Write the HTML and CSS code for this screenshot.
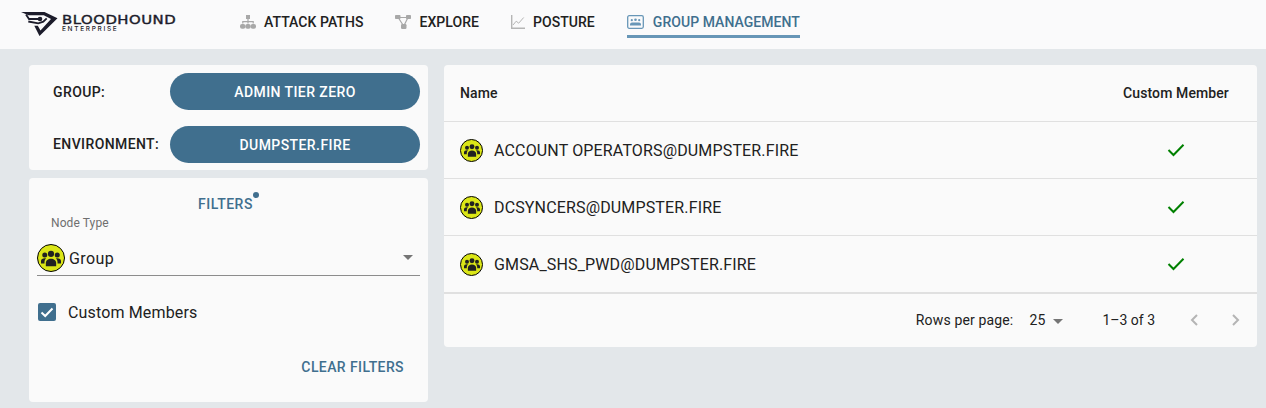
FILE: index.html
```html
<!DOCTYPE html>
<html lang="en">
<head>
<meta charset="utf-8">
<title>BloodHound Enterprise - Group Management</title>
<link rel="stylesheet" href="styles.css">
</head>
<body>
<svg class="defs" width="0" height="0" aria-hidden="true">
  <symbol id="group-glyph" viewBox="0 0 24 24">
    <circle cx="12" cy="7" r="3.700"/>
    <circle cx="4.500" cy="8.500" r="3"/>
    <circle cx="19.500" cy="8.500" r="3"/>
    <path d="M5.800 22v-4c0-3.200 2.800-5.200 6.200-5.200s6.200 2 6.200 5.200v4z"/>
    <path d="M0 18.500v-3c0-2 2-3.300 4.600-3.300 .6 0 1.100.1 1.600.2-1.300 1-2 2.800-2 4.500v1.600z"/>
    <path d="M24 18.500v-3c0-2-2-3.300-4.600-3.300-.6 0-1.100.1-1.600.2 1.300 1 2 2.800 2 4.500v1.600z"/>
  </symbol>
</svg>
<header class="nav">
  <div class="logo">
    <svg class="logo-mark" viewBox="0 0 37 28" width="37" height="28">
      <path class="logo-fill" d="M0 2H23.500L36.500 8.300 18.500 26 13.300 15.700H16.800L19.500 20.500 30 9 22.800 5.300H7.500Z"/>
      <path class="logo-line" d="M5 4.500 8 9H19M7.300 11.500 17.300 13.300 22.300 11.700 25.700 8.300"/>
      <circle class="logo-fill" cx="19" cy="9" r="2.300"/>
    </svg>
    <div class="logo-text">
      <span class="logo-name">BLOODHOUND</span>
      <span class="logo-sub">ENTERPRISE</span>
    </div>
  </div>
  <nav class="nav-items">
    <a class="nav-item">
      <svg class="nav-icon" viewBox="0 0 16 14" width="16" height="14">
        <path d="M6 0h4v4H8.600v2h5.200v2.400h-1.200V7.200H8.600v1.200H7.400V7.200H3.400v1.200H2.200V6h5.200V4H6z"/>
        <rect x="0" y="9" width="5.400" height="4.800" rx="2"/><rect x="5.300" y="9" width="5.400" height="4.800" rx="2"/><rect x="10.600" y="9" width="5.400" height="4.800" rx="2"/>
      </svg>
      <span>ATTACK PATHS</span>
    </a>
    <a class="nav-item">
      <svg class="nav-icon" viewBox="0 0 16 14" width="16" height="14">
        <rect x="0" y="0" width="5.500" height="4" rx=".8"/><rect x="11" y="0" width="5" height="4" rx=".8"/><rect x="6" y="9" width="5.500" height="5" rx="1.200"/>
        <path class="nav-line" d="M4 2.500h8M3.500 3l4.500 7M12.500 3.500l-3 6"/>
      </svg>
      <span>EXPLORE</span>
    </a>
    <a class="nav-item">
      <svg class="nav-icon nav-icon-line" viewBox="0 0 14 14" width="14" height="14">
        <path d="M.7 0v13.300H14"/>
        <path class="thin" d="M2 10l3.200-3.800 2.500 2 5-5.700"/>
      </svg>
      <span>POSTURE</span>
    </a>
    <a class="nav-item nav-item-active">
      <svg class="nav-icon" viewBox="0 0 17 14" width="17" height="14">
        <rect class="frame" x=".7" y=".7" width="15.600" height="12.600" rx="1.500"/>
        <circle cx="4.800" cy="5.200" r="1.100"/><circle cx="8.500" cy="4.800" r="1.300"/><circle cx="12.200" cy="5.200" r="1.100"/>
        <path d="M3 9.800c0-1.600 1-2.400 2-2.400h7c1 0 2 .8 2 2.400v.7H3z"/>
      </svg>
      <span>GROUP MANAGEMENT</span>
    </a>
  </nav>
</header>

<main class="content">
  <aside class="sidebar">
    <section class="card selectors">
      <div class="selector-row">
        <span class="selector-label">GROUP:</span>
        <button class="pill">ADMIN TIER ZERO</button>
      </div>
      <div class="selector-row selector-row-env">
        <span class="selector-label">ENVIRONMENT:</span>
        <button class="pill">DUMPSTER.FIRE</button>
      </div>
    </section>
    <section class="card filters">
      <div class="filters-title"><span class="filters-text">FILTERS<i class="badge"></i></span></div>
      <div class="field-label">Node Type</div>
      <div class="select">
        <span class="node-icon node-icon-lg"><svg><use href="#group-glyph"/></svg></span>
        <span class="select-value">Group</span>
        <i class="caret"></i>
      </div>
      <label class="check-row">
        <span class="checkbox"><svg viewBox="0 0 18 18" width="18" height="18"><path d="M3.500 9.500l3.700 3.500 7.300-7.500"/></svg></span>
        <span>Custom Members</span>
      </label>
      <div class="filters-actions"><button class="text-btn">CLEAR FILTERS</button></div>
    </section>
  </aside>

  <section class="card table-card">
    <div class="row head">
      <div class="cell-name">Name</div>
      <div class="cell-member">Custom Member</div>
    </div>
    <div class="row">
      <div class="cell-name"><span class="node-icon"><svg><use href="#group-glyph"/></svg></span>ACCOUNT OPERATORS@DUMPSTER.FIRE</div>
      <div class="cell-member"><svg class="tick" viewBox="0 0 18 14" width="18" height="14"><path d="M1.500 7l5 5L16.500 1.800"/></svg></div>
    </div>
    <div class="row">
      <div class="cell-name"><span class="node-icon"><svg><use href="#group-glyph"/></svg></span>DCSYNCERS@DUMPSTER.FIRE</div>
      <div class="cell-member"><svg class="tick" viewBox="0 0 18 14" width="18" height="14"><path d="M1.500 7l5 5L16.500 1.800"/></svg></div>
    </div>
    <div class="row row-last">
      <div class="cell-name"><span class="node-icon"><svg><use href="#group-glyph"/></svg></span>GMSA_SHS_PWD@DUMPSTER.FIRE</div>
      <div class="cell-member"><svg class="tick" viewBox="0 0 18 14" width="18" height="14"><path d="M1.500 7l5 5L16.500 1.800"/></svg></div>
    </div>
    <div class="pagination">
      <span>Rows per page:</span>
      <span class="per-page">25<i class="caret caret-sm"></i></span>
      <span class="range">1–3 of 3</span>
      <span class="pager">
        <svg viewBox="0 0 10 14" width="10" height="14"><path d="M8 2L3 7l5 5"/></svg>
        <svg viewBox="0 0 10 14" width="10" height="14"><path d="M2 2l5 5-5 5"/></svg>
      </span>
    </div>
  </section>
</main>
</body>
</html>
```
FILE: styles.css
```css
* { box-sizing: border-box; }
html, body { margin: 0; height: 100%; }
body {
  background: #e3e7ea;
  font-family: Roboto, "Liberation Sans", sans-serif;
  color: #212121;
  overflow: hidden;
}
.defs { position: absolute; }

.nav {
  height: 49px;
  background: #fafafb;
  display: flex;
  align-items: flex-start;
  padding-left: 21px;
}
.logo { display: flex; align-items: flex-start; width: 219px; padding-top: 10px; }
.logo-mark { display: block; width: 37px; height: 28px; margin-right: 4px; }
.logo-fill { fill: #1c1c2b; }
.logo-line { fill: none; stroke: #1c1c2b; stroke-width: 1.800; }
.logo-text { display: flex; flex-direction: column; padding-top: 5px; }
.logo-name {
  font-family: "DejaVu Sans", sans-serif;
  font-size: 12px;
  line-height: 11px;
  letter-spacing: .4px;
  color: #1c1c2b;
  font-weight: 400;
  -webkit-text-stroke: .4px #1c1c2b;
  transform: scaleX(1.24);
  transform-origin: left center;
  white-space: nowrap;
}
.logo-sub {
  font-family: Inter, sans-serif;
  font-size: 6.500px;
  line-height: 7px;
  letter-spacing: 1.700px;
  color: #1c1c2b;
  font-weight: 500;
}
.nav-items { display: flex; gap: 32px; }
.nav-item {
  height: 38px;
  display: flex;
  align-items: center;
  gap: 8px;
  font-size: 14px;
  font-weight: 500;
  letter-spacing: .05px;
  color: #212121;
  padding-top: 8px;
  padding-bottom: 2px;
}
.nav-icon { fill: #a8a8a8; display: block; }
.nav-line { fill: none; stroke: #a8a8a8; stroke-width: 1.200; }
.nav-icon-line { fill: none; stroke: #b5b5b5; stroke-width: 1.400; }
.nav-icon-line .thin { stroke-width: 1; }
.nav-item-active { color: #406f8e; border-bottom: 3px solid #6796b7; padding-bottom: 0; gap: 9px; }
.nav-item-active .nav-icon { fill: #6796b7; }
.nav-item-active .frame { fill: none; stroke: #6796b7; stroke-width: 1.300; }

.content {
  display: flex;
  gap: 16px;
  padding: 16px 9px 0 29px;
  align-items: flex-start;
}
.sidebar { width: 399px; flex: none; display: flex; flex-direction: column; gap: 8px; }
.card { background: #fafafa; border-radius: 4px; }

.selectors { height: 105px; padding: 8px 8px 0 24px; display: flex; flex-direction: column; gap: 16px; }
.selector-row { display: flex; align-items: center; justify-content: space-between; height: 37px; }
.selector-label { font-size: 14px; font-weight: 500; letter-spacing: .4px; color: #212121; }
.selector-row-env .selector-label { margin-bottom: 2px; }
.pill {
  width: 250px;
  height: 100%;
  border: 0;
  border-radius: 19px;
  background: #406f8e;
  color: #fff;
  font: 500 14px Roboto, sans-serif;
  letter-spacing: .42px;
}

.filters { height: 224px; padding: 0 8px; display: flex; flex-direction: column; }
.filters-title { height: 45px; padding: 17px 6px 0 0; text-align: center; font-size: 14px; font-weight: 500; color: #406f8e; line-height: 18px; letter-spacing: .5px; }
.filters-text { position: relative; }
.badge { position: absolute; right: -6px; top: -4px; width: 6px; height: 6px; border-radius: 50%; background: #406f8e; }
.field-label { font-size: 12px; color: #6f6f6f; line-height: 14px; margin-left: 14px; margin-top: -7px; letter-spacing: .1px; }
.select {
  margin-top: 13px;
  height: 33px;
  padding-bottom: 2px;
  display: flex;
  align-items: center;
  border-bottom: 1px solid #8c8c8c;
  position: relative;
  font-size: 16px;
}
.select-value { margin-left: 4px; letter-spacing: .4px; }
.caret { position: absolute; right: 7px; top: 12px; width: 0; height: 0; border: 5px solid transparent; border-top-color: #757575; border-bottom: 0; }
.check-row { display: flex; align-items: center; gap: 12px; margin-top: 26px; margin-left: 1px; font-size: 16px; letter-spacing: .15px; height: 20px; }
.checkbox { width: 18px; height: 18px; border-radius: 2px; background: #406f8e; display: block; }
.checkbox svg { display: block; fill: none; stroke: #fff; stroke-width: 2; }
.filters-actions { margin-top: 33px; display: flex; justify-content: flex-end; padding-right: 16px; }
.text-btn { background: none; border: 0; padding: 0; color: #406f8e; font: 500 14px Roboto, sans-serif; letter-spacing: .4px; line-height: 24px; }

.node-icon {
  width: 23px;
  height: 23px;
  flex: none;
  border-radius: 50%;
  background: #dbe617;
  border: 1px solid #000;
  display: inline-flex;
  align-items: center;
  justify-content: center;
  margin-right: 11px;
}
.node-icon svg { width: 16px; height: 16px; fill: #212121; }
.node-icon-lg { width: 28px; height: 28px; margin-right: 0; }
.node-icon-lg svg { width: 20px; height: 20px; }

.table-card { flex: 1; height: 282px; display: flex; flex-direction: column; }
.row { height: 57px; display: flex; align-items: center; padding: 0 16px; border-bottom: 1px solid #e0e0e0; font-size: 16px; letter-spacing: .15px; }
.head { font-size: 14px; font-weight: 500; letter-spacing: .1px; }
.row-last { height: 58px; border-bottom-width: 2px; }
.cell-name { flex: 1; display: flex; align-items: center; }
.cell-member { width: 130px; display: flex; justify-content: center; }
.head .cell-member { white-space: nowrap; }
.tick { fill: none; stroke: #008000; stroke-width: 2; display: block; }

.pagination { flex: 1; display: flex; align-items: center; justify-content: flex-end; padding: 0 16px 2px 0; font-size: 14px; letter-spacing: .15px; }
.per-page { position: relative; margin-left: 16px; width: 34px; }
.caret-sm { right: 0; top: 7px; }
.range { margin-left: 39px; letter-spacing: 0; }
.pager { display: flex; gap: 32px; margin-left: 34px; }
.pager svg { display: block; fill: none; stroke: #b4b4b4; stroke-width: 2; }
```
